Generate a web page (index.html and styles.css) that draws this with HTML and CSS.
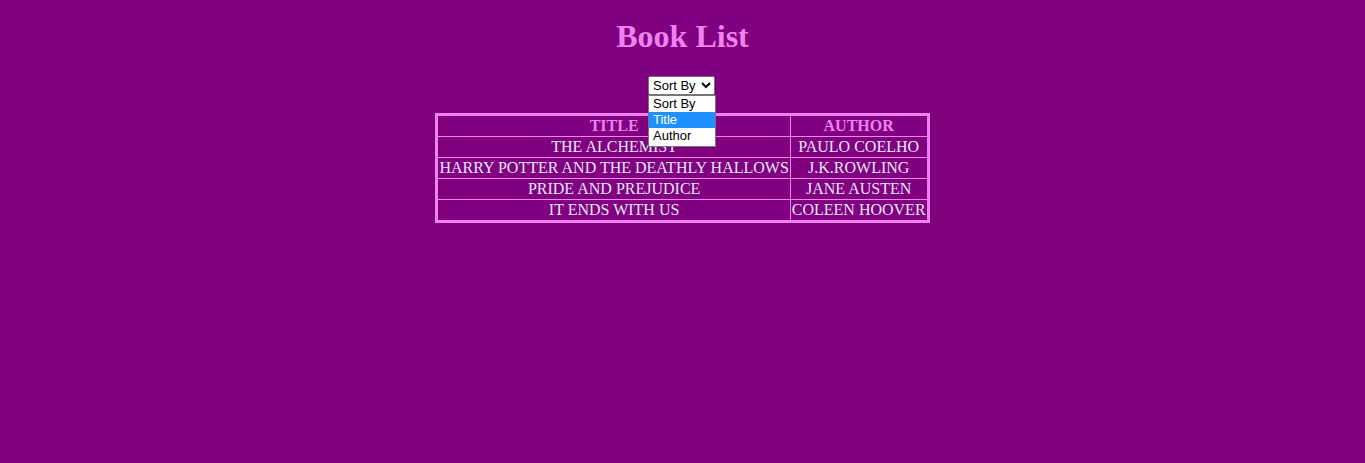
FILE: index.html
```html
<!DOCTYPE html>
<html>
<head>
<meta charset="utf-8">
<link rel="stylesheet" href="styles.css">
</head>
<body>
<h1 class="title">Book List</h1>
<div class="sort">
  <div class="sort-wrap">
    <select class="sort-select">
      <option>Sort By</option>
      <option>Title</option>
      <option>Author</option>
    </select>
    <ul class="sort-menu">
      <li>Sort By</li>
      <li class="active">Title</li>
      <li>Author</li>
    </ul>
  </div>
</div>
<table class="books">
  <thead>
    <tr><th>TITLE</th><th>AUTHOR</th></tr>
  </thead>
  <tbody>
    <tr><td>THE ALCHEMIST</td><td>PAULO COELHO</td></tr>
    <tr><td>HARRY POTTER AND THE DEATHLY HALLOWS</td><td>J.K.ROWLING</td></tr>
    <tr><td>PRIDE AND PREJUDICE</td><td>JANE AUSTEN</td></tr>
    <tr><td>IT ENDS WITH US</td><td>COLEEN HOOVER</td></tr>
  </tbody>
</table>
</body>
</html>
```
FILE: styles.css
```css
html, body {
  background: #800080;
}
body {
  margin: 8px;
  font-family: "Liberation Serif", "Times New Roman", serif;
  color: #e6e6fa;
}
.title {
  text-align: center;
  color: #ee82ee;
  font-size: 32px;
  font-weight: bold;
  margin: 10px 0 21px;
}
.sort {
  display: flex;
  justify-content: center;
  margin-bottom: 18px;
}
.sort-wrap {
  position: relative;
  margin-right: 2px;
}
.sort-select {
  font-family: "Liberation Sans", Arial, sans-serif;
  font-size: 13px;
  width: 67px;
  height: 19px;
  padding: 0;
  background: #fff;
  color: #000;
  border: 1px solid #767676;
  border-radius: 2px;
}
.sort-menu {
  position: absolute;
  top: 19px;
  left: 0;
  width: 66px;
  margin: 0;
  padding: 0 0 2px;
  list-style: none;
  background: #fff;
  border: 1px solid #767676;
  font-family: "Liberation Sans", Arial, sans-serif;
  font-size: 13px;
  color: #000;
  z-index: 2;
}
.sort-menu li {
  height: 16px;
  line-height: 16px;
  padding-left: 4px;
}
.sort-menu li.active {
  background: #1e90ff;
  color: #fff;
}
.books {
  margin: 0 auto;
  border-collapse: collapse;
  border: 3px solid #ee82ee;
}
.books th, .books td {
  border: 1px solid #ee82ee;
  padding: 1px;
  text-align: center;
  font-size: 16px;
}
.books th {
  color: #ee82ee;
  font-weight: bold;
}
```
